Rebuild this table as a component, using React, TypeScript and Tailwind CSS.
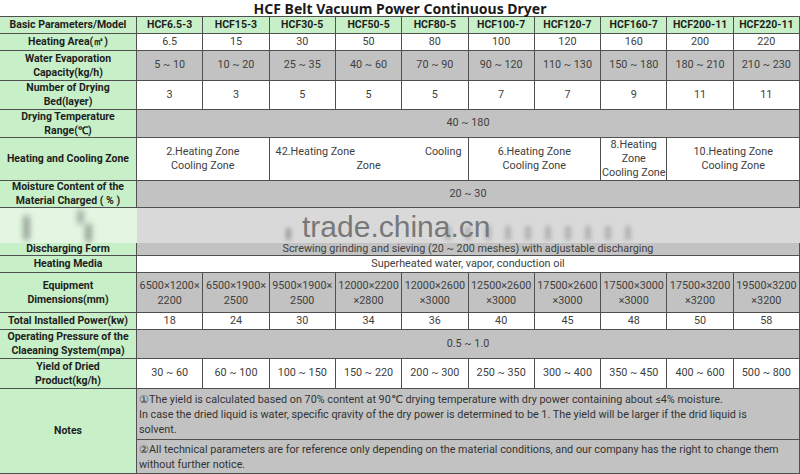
import React from "react";

const models = ["HCF6.5-3", "HCF15-3", "HCF30-5", "HCF50-5", "HCF80-5", "HCF100-7", "HCF120-7", "HCF160-7", "HCF200-11", "HCF220-11"];
const area = ["6.5", "15", "30", "50", "80", "100", "120", "160", "200", "220"];
const evap = ["5 ~ 10", "10 ~ 20", "25 ~ 35", "40 ~ 60", "70 ~ 90", "90 ~ 120", "110 ~ 130", "150 ~ 180", "180 ~ 210", "210 ~ 230"];
const beds = ["3", "3", "5", "5", "5", "7", "7", "9", "11", "11"];
const dims = [
  ["6500×1200×", "2200"], ["6500×1900×", "2500"], ["9500×1900×", "2500"], ["12000×2200", "×2800"], ["12000×2600", "×3000"],
  ["12500×2600", "×3000"], ["17500×2600", "×3000"], ["17500×3000", "×3000"], ["17500×3200", "×3200"], ["19500×3200", "×3200"],
];
const power = ["18", "24", "30", "34", "36", "40", "45", "48", "50", "58"];
const yields = ["30 ~ 60", "60 ~ 100", "100 ~ 150", "150 ~ 220", "200 ~ 300", "250 ~ 350", "300 ~ 400", "350 ~ 450", "400 ~ 600", "500 ~ 800"];

const grid = "grid grid-cols-[137px_repeat(10,minmax(0,1fr))]";
const cell = "flex flex-col items-center justify-center text-center whitespace-nowrap border-r border-b border-[#505050]";

function Label({ children }: { children: React.ReactNode }) {
  return (
    <div className={`${cell} bg-[#c8f0c8] font-bold text-[10.5px] text-[#1e1e1e] leading-[14px] overflow-hidden`}>
      {children}
    </div>
  );
}

function Values({ items, bg }: { items: string[]; bg: string }) {
  return (
    <>
      {items.map((v, i) => (
        <div key={i} className={`${cell} ${bg} text-[#404040]`}>{v}</div>
      ))}
    </>
  );
}

export default function App() {
  return (
    <div className="w-[800px] h-[474px] overflow-hidden bg-white text-[10.8px] font-['Roboto',sans-serif]">
      <div className="h-[17px] flex items-center justify-center border-b border-[#505050] font-bold text-[14px] text-[#1a1a1a] font-['Noto_Sans',sans-serif]">
        HCF Belt Vacuum Power Continuous Dryer
      </div>

      <div className={`${grid} h-[17px]`}>
        <Label>Basic Parameters/Model</Label>
        {models.map((m) => (
          <div key={m} className={`${cell} bg-[#c8f0c8] font-bold text-[10.5px] text-[#1e1e1e]`}>{m}</div>
        ))}
      </div>

      <div className={`${grid} h-[17px]`}>
        <Label>Heating Area(㎡)</Label>
        <Values items={area} bg="bg-white" />
      </div>

      <div className={`${grid} h-[30px]`}>
        <Label><span>Water Evaporation</span><span>Capacity(kg/h)</span></Label>
        <Values items={evap} bg="bg-[#c2c2c2]" />
      </div>

      <div className={`${grid} h-[29px]`}>
        <Label><span>Number of Drying</span><span>Bed(layer)</span></Label>
        <Values items={beds} bg="bg-white" />
      </div>

      <div className={`${grid} h-[28px]`}>
        <Label><span>Drying Temperature</span><span>Range(℃)</span></Label>
        <div className={`${cell} col-span-10 bg-[#c2c2c2] text-[#404040]`}>40 ~ 180</div>
      </div>

      <div className={`${grid} h-[43px] leading-[14px] text-[#404040]`}>
        <Label>Heating and Cooling Zone</Label>
        <div className={`${cell} col-span-2 bg-white`}><span>2.Heating Zone</span><span>Cooling Zone</span></div>
        <div className={`${cell} col-span-3 bg-white px-[6px] !items-stretch`}>
          <div className="flex justify-between"><span>42.Heating Zone</span><span>Cooling</span></div>
          <div className="text-center">Zone</div>
        </div>
        <div className={`${cell} col-span-2 bg-white`}><span>6.Heating Zone</span><span>Cooling Zone</span></div>
        <div className={`${cell} bg-white !justify-end`}><span>8.Heating</span><span>Zone</span><span>Cooling Zone</span></div>
        <div className={`${cell} col-span-2 bg-white`}><span>10.Heating Zone</span><span>Cooling Zone</span></div>
      </div>

      <div className={`${grid} h-[27px]`}>
        <Label><span>Moisture Content of the</span><span>Material Charged ( % )</span></Label>
        <div className={`${cell} col-span-10 bg-[#c2c2c2] text-[#404040]`}>20 ~ 30</div>
      </div>

      {/* watermark band */}
      <div className={`${grid} h-[35px] relative overflow-hidden`}>
        <div className="bg-[#e2f6e2]" />
        <div className="col-span-10 bg-[#d9d9d9]" />
        <div className="absolute left-[24px] top-[8px] w-[5px] h-[24px] bg-[#555] blur-[3px] opacity-70" />
        <div className="absolute left-[78px] top-[2px] w-[5px] h-[14px] bg-[#555] blur-[3px] opacity-60" />
        <div className="absolute left-[86px] top-[16px] w-[5px] h-[18px] bg-[#555] blur-[3px] opacity-70" />
        <div className="absolute left-[286px] top-[20px] w-[5px] h-[12px] bg-[#777] blur-[2px] opacity-60" />
        <div className="absolute left-[445px] top-[18px] w-[200px] h-[14px] bg-[repeating-linear-gradient(90deg,#9a9a9a_0_6px,transparent_6px_20px)] blur-[2px] opacity-60" />
        <div className="absolute left-[302px] top-[4px] text-[30px] leading-none text-[#787878] font-['Liberation_Sans',sans-serif]">
          trade.china.cn
        </div>
      </div>

      <div className={`${grid} h-[13px] leading-[12px]`}>
        <Label>Discharging Form</Label>
        <div className={`${cell} col-span-10 bg-[#c2c2c2] text-[#404040]`}>
          Screwing grinding and sieving (20 ~ 200 meshes) with adjustable discharging
        </div>
      </div>

      <div className={`${grid} h-[17px]`}>
        <Label>Heating Media</Label>
        <div className={`${cell} col-span-10 bg-white text-[#404040]`}>Superheated water, vapor, conduction oil</div>
      </div>

      <div className={`${grid} h-[40px] leading-[15px]`}>
        <Label><span>Equipment</span><span>Dimensions(mm)</span></Label>
        {dims.map((d, i) => (
          <div key={i} className={`${cell} bg-[#c2c2c2] text-[#404040]`}><span>{d[0]}</span><span>{d[1]}</span></div>
        ))}
      </div>

      <div className={`${grid} h-[17px]`}>
        <Label>Total Installed Power(kw)</Label>
        <Values items={power} bg="bg-white" />
      </div>

      <div className={`${grid} h-[29px]`}>
        <Label><span>Operating Pressure of the</span><span>Claeaning System(mpa)</span></Label>
        <div className={`${cell} col-span-10 bg-[#c2c2c2] text-[#404040]`}>0.5 ~ 1.0</div>
      </div>

      <div className={`${grid} h-[30px]`}>
        <Label><span>Yield of Dried</span><span>Product(kg/h)</span></Label>
        <Values items={yields} bg="bg-white" />
      </div>

      <div className={`${grid} h-[85px] leading-[15px] text-[#333]`}>
        <Label>Notes</Label>
        <div className="col-span-10 flex flex-col border-r border-b border-[#505050] bg-[#c2c2c2] whitespace-nowrap">
          <div className="h-[51px] border-b border-[#505050] px-[2px] flex flex-col justify-center">
            <span>①The yield is calculated based on 70% content at 90℃ drying temperature with dry power containing about ≤4% moisture.</span>
            <span>In case the dried liquid is water, specific qravity of the dry power is determined to be 1. The yield will be larger if the drid liquid is</span>
            <span>solvent.</span>
          </div>
          <div className="flex-1 px-[2px] flex flex-col justify-center">
            <span>②All technical parameters are for reference only depending on the material conditions, and our company has the right to change them</span>
            <span>without further notice.</span>
          </div>
        </div>
      </div>
    </div>
  );
}
